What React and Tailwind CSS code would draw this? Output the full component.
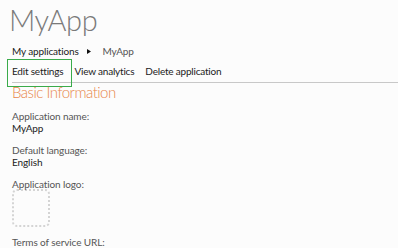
export default function App() {
  const font = { fontFamily: 'Lato, "Open Sans", sans-serif' };
  return (
    <div className="w-[398px] h-[248px] overflow-hidden bg-[#fcfcfc] text-[#222]" style={font}>
      <h1 className="pl-[9px] pt-[2px] text-[29px] font-light leading-[36px] tracking-[-0.4px] text-[#7a7a7a]">MyApp</h1>
      <div className="mt-[7px] pl-3 flex items-center text-[10px] leading-[13px] tracking-[-0.15px]">
        <span className="text-[#222]">My applications</span>
        <svg className="ml-[8px] mr-[12px]" width="4" height="5" viewBox="0 0 4 5">
          <path d="M0 0 L4 2.5 L0 5 Z" fill="#111" />
        </svg>
        <span className="text-[#555]">MyApp</span>
      </div>
      <div className="mt-[7px] ml-3 flex items-end gap-[11px] border-b border-[#c8c8c8] text-[10px] leading-[13px] tracking-[-0.2px] pb-[4px] text-[#222]">
        <span className="relative">
          Edit settings
          <span className="absolute left-[-5px] right-[-9px] top-[-6px] bottom-[-9px] border border-[#3aab4a]"></span>
        </span>
        <span>View analytics</span>
        <span>Delete application</span>
      </div>
      <div className="pl-3 text-[15px] font-light leading-[18px] tracking-[-0.5px] text-[#e8864a]">Basic Information</div>
      <div className="pl-3 mt-[9px] text-[10px] leading-[12px] tracking-[-0.1px]">
        <div className="text-[#555]">Application name:</div>
        <div className="text-[#222]">MyApp</div>
        <div className="mt-[10px] text-[#555]">Default language:</div>
        <div className="text-[#222]">English</div>
        <div className="mt-[10px] text-[#555]">Application logo:</div>
        <div className="mt-[-1px] w-[38px] h-[38px] rounded-[5px] border-2 border-dotted border-[#d4d4d4]"></div>
        <div className="mt-[9px] text-[#555]">Terms of service URL:</div>
      </div>
    </div>
  );
}
